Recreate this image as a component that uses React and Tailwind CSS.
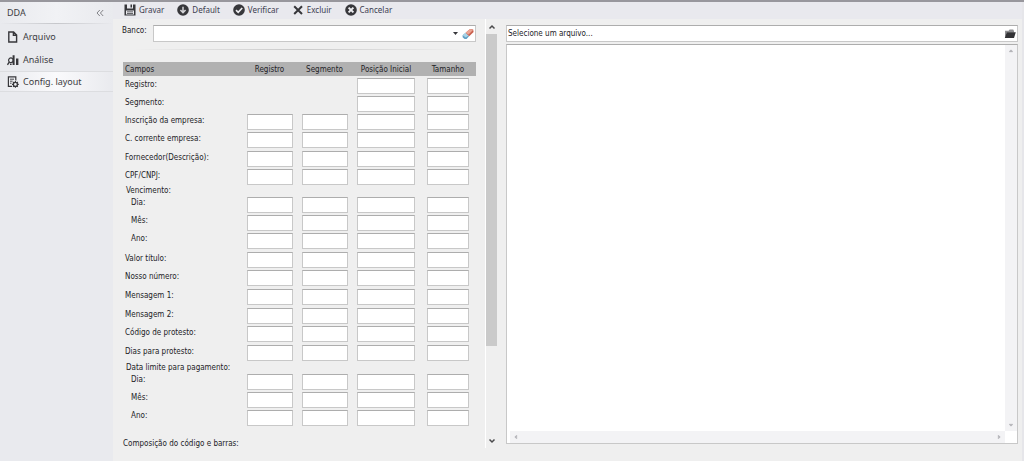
import React from 'react'

const FloppyIcon = () => (
  <svg className="w-3 h-3 shrink-0" viewBox="0 0 12 12" fill="#37373b">
    <path fillRule="evenodd" d="M0.5 0.5h11v11h-11z M3 0.5v4h6v-4z M2 6.5v4h8v-4z" />
    <path d="M6.5 0.5h1.5v3H6.5z M3 7.5h6v0.8H3z M3 9.2h6v0.8H3z" />
  </svg>
)

const DownIcon = () => (
  <svg className="w-3 h-3 shrink-0" viewBox="0 0 12 12">
    <circle cx="6" cy="6" r="5.8" fill="#37373b" />
    <path d="M6 2.8v5.4M3.4 6L6 8.6L8.6 6" fill="none" stroke="#d4d4d8" strokeWidth="1.5" />
  </svg>
)

const CheckIcon = () => (
  <svg className="w-3 h-3 shrink-0" viewBox="0 0 12 12">
    <circle cx="6" cy="6" r="5.8" fill="#37373b" />
    <path d="M3 6.2l2.2 2.1L9.2 4" fill="none" stroke="#eeeef2" strokeWidth="1.7" />
  </svg>
)

const CrossIcon = () => (
  <svg className="w-3 h-3 shrink-0" viewBox="0 0 12 12">
    <path d="M2.2 2.2l7.8 7.8M10 2.2L2.2 10" fill="none" stroke="#37373b" strokeWidth="2" />
  </svg>
)

const CancelIcon = () => (
  <svg className="w-3 h-3 shrink-0" viewBox="0 0 12 12">
    <circle cx="6" cy="6" r="5.8" fill="#37373b" />
    <path d="M3.6 3.6l4.8 4.8M8.4 3.6L3.6 8.4" fill="none" stroke="#eeeef2" strokeWidth="2" />
  </svg>
)

const FileIcon = () => (
  <svg className="w-3 h-3 shrink-0" viewBox="0 0 12 12">
    <path d="M1.8 1h4.8l3 3v7H1.8z M6.4 1v3.2h3.2" fill="none" stroke="#37373b" strokeWidth="1.4" />
  </svg>
)

const AnalysisIcon = () => (
  <svg className="w-3 h-3 shrink-0" viewBox="0 0 12 12">
    <circle cx="3.9" cy="6.2" r="2.3" fill="none" stroke="#37373b" strokeWidth="1.2" />
    <path d="M2.4 8L0.4 10.8" stroke="#37373b" strokeWidth="1.4" />
    <path d="M5.6 1.2h2v9.8h-2z M9 4.6h2.4V11H9z M3 9.4h1.6V11H3z" fill="#37373b" />
  </svg>
)

const LayoutIcon = () => (
  <svg className="w-3 h-3 shrink-0" viewBox="0 0 12 12">
    <path d="M5 10.4H1.4V0.9h7.4v3.6" fill="none" stroke="#37373b" strokeWidth="1.2" />
    <path d="M3 3.2h4M3 5.2h2.6M3 7.2h1.6" stroke="#37373b" strokeWidth="0.9" />
    <circle cx="8.4" cy="8.4" r="2" fill="none" stroke="#37373b" strokeWidth="1.3" />
    <path d="M8.4 5v1.4M8.4 10.4v1.4M5 8.4h1.4M10.4 8.4h1.4M6 6l1 1M9.8 9.8l1 1M10.8 6l-1 1M7 9.8l-1 1" stroke="#37373b" strokeWidth="1.1" />
  </svg>
)

const EraserIcon = () => (
  <svg className="w-3 h-3" viewBox="0 0 12 12">
    <path d="M0.6 7.2L3.6 4.8l3.6 3.2L4.6 11H2.6L0.6 9.2z" fill="#5f9fc4" />
    <path d="M0.6 7.2L3.6 4.8l3 2.6L3.8 9.4z" fill="#a9d3e6" />
    <path d="M3.6 4.8L8 1l3.2 0.6L11.6 4L7.2 8.2z" fill="#c9604e" />
    <path d="M3.6 4.8L8 1l3 0.9L6.6 6.6z" fill="#eba594" />
  </svg>
)

const FolderIcon = () => (
  <svg className="w-3 h-3" viewBox="0 0 12 12">
    <path d="M1 10V2.8h3.6L5.6 1.6h3.6L10 3v1.4H3z" fill="#8d8d90" />
    <path d="M2.8 4.2H11.8L10 10H0.8z" fill="#323235" />
  </svg>
)

const Arrow = ({ d, color = '#4a4a4c' }) => (
  <svg className="w-2 h-2" viewBox="0 0 8 8">
    <path d={d} fill="none" stroke={color} strokeWidth="1.5" />
  </svg>
)

const actions = [
  { label: 'Gravar', icon: FloppyIcon },
  { label: 'Default', icon: DownIcon },
  { label: 'Verificar', icon: CheckIcon },
  { label: 'Excluir', icon: CrossIcon },
  { label: 'Cancelar', icon: CancelIcon },
]

const menu = [
  { label: 'Arquivo', icon: FileIcon },
  { label: 'Análise', icon: AnalysisIcon },
  { label: 'Config. layout', icon: LayoutIcon, active: true },
]

const columns = [
  { name: 'Registro', width: 'w-[46px]' },
  { name: 'Segmento', width: 'w-[46px]' },
  { name: 'Posição Inicial', width: 'w-[58px]' },
  { name: 'Tamanho', width: 'w-[42px]' },
]

const short = 'h-[18px]'
const tall = 'h-[19px]'

const rows = [
  { label: 'Registro:', height: short, from: 2 },
  { label: 'Segmento:', height: short, from: 2 },
  { label: 'Inscrição da empresa:', height: short },
  { label: 'C. corrente empresa:', height: tall },
  { label: 'Fornecedor(Descrição):', height: short },
  { label: 'CPF/CNPJ:', height: short },
  { label: 'Vencimento:', title: true },
  { label: 'Dia:', height: short, nested: true },
  { label: 'Mês:', height: short, nested: true },
  { label: 'Ano:', height: tall, nested: true },
  { label: 'Valor título:', height: short },
  { label: 'Nosso número:', height: tall },
  { label: 'Mensagem 1:', height: tall },
  { label: 'Mensagem 2:', height: short },
  { label: 'Código de protesto:', height: tall },
  { label: 'Dias para protesto:', height: tall },
  { label: 'Data limite para pagamento:', title: true },
  { label: 'Dia:', height: short, nested: true },
  { label: 'Mês:', height: short, nested: true },
  { label: 'Ano:', height: short, nested: true },
]

const Sidebar = () => (
  <aside className="w-[113px] shrink-0 bg-[#e9eaee] font-['Noto_Sans',sans-serif] text-[9px] text-[#3c3c42]">
    <div className="h-[21px] pl-[7px] pr-[9px] flex items-center justify-between bg-linear-to-r from-[#e9eaee] via-[#f1f2f5] to-[#e9eaee]">
      <span>DDA</span>
      <button aria-label="Recolher menu" className="flex">
        <svg className="w-2 h-2" viewBox="0 0 8 8">
          <path d="M3.8 1L1 4l2.8 3M7.2 1L4.4 4l2.8 3" fill="none" stroke="#77777c" strokeWidth="0.9" />
        </svg>
      </button>
    </div>
    <div className="h-px bg-linear-to-r from-[#e9eaee] via-[#c6c7cb] to-[#e9eaee]"></div>
    <nav className="pt-px">
      {menu.map(({ label, icon: Icon, active }) => (
        <a
          key={label}
          href="#"
          className={
            active
              ? 'h-[21px] pl-[7px] flex items-center gap-1 bg-linear-to-r from-[#e9eaee] via-[#fafafc] to-[#e9eaee] border-y border-[#dcdde0]'
              : 'h-[23px] pl-[7px] flex items-center gap-1'
          }
        >
          <Icon />
          <span>{label}</span>
        </a>
      ))}
    </nav>
  </aside>
)

const Toolbar = () => (
  <div className="h-[17px] pl-[11px] pb-0.5 flex items-center gap-[13px] bg-[#e9e9ee] font-['Noto_Sans',sans-serif] text-[8px] text-[#3c3c50]">
    {actions.map(({ label, icon: Icon }) => (
      <button key={label} className="flex items-center gap-[3px]">
        <Icon />
        {label}
      </button>
    ))}
  </div>
)

const LayoutTable = () => (
  <table className="w-full table-fixed border-collapse">
    <colgroup>
      <col />
      <col className="w-[55px]" />
      <col className="w-[55px]" />
      <col className="w-[68px]" />
      <col className="w-[56px]" />
    </colgroup>
    <thead>
      <tr className="h-[14px] bg-[#b1b1b1]">
        <th className="p-0 pt-0.5 pl-0.5 text-left font-normal leading-3">Campos</th>
        {columns.map((col) => (
          <th key={col.name} className="p-0 pt-0.5 font-normal leading-3 whitespace-nowrap">{col.name}</th>
        ))}
      </tr>
    </thead>
    <tbody>
      <tr className="h-px"><td colSpan={5} className="p-0"></td></tr>
      {rows.map((row, i) =>
        row.title ? (
          <tr key={i} className="h-[10px]">
            <th colSpan={5} className="p-0 pl-[3px] text-left font-normal leading-[10px]">{row.label}</th>
          </tr>
        ) : (
          <tr key={i} className={row.height}>
            <th
              className={
                row.nested
                  ? 'p-0 pl-2 text-left align-top font-normal leading-[14px]'
                  : 'p-0 pl-0.5 text-left align-top font-normal leading-4'
              }
            >
              {row.label}
            </th>
            {columns.map((col, c) => (
              <td key={col.name} className="p-0 pt-px align-top">
                {c >= (row.from || 0) && (
                  <input
                    type="text"
                    aria-label={`${row.label} ${col.name}`}
                    className={`${col.width} block mx-auto h-4 px-1 bg-white border border-[#c8c8c8] border-t-[#adadad] outline-none`}
                  />
                )}
              </td>
            ))}
          </tr>
        )
      )}
    </tbody>
  </table>
)

const FormPanel = () => (
  <section className="w-[384px] shrink-0 flex min-h-0">
    <div className="flex-1 min-w-0 overflow-hidden pl-[9px] pr-[9px] pt-[6px]">
      <div className="flex items-start">
        <label htmlFor="banco" className="w-[31px] leading-3">Banco:</label>
        <div className="flex-1 h-[17px] pr-px flex items-center gap-1 bg-white border border-[#c8c8c8] border-t-[#adadad]">
          <select id="banco" className="flex-1 h-full appearance-none outline-none"></select>
          <svg className="w-[5px] h-[3px]" viewBox="0 0 5 3">
            <path d="M0 0h5L2.5 3z" fill="#37373b" />
          </svg>
          <button aria-label="Limpar banco" className="flex"><EraserIcon /></button>
        </div>
      </div>
      <div className="mx-3 mt-[7px] mb-3 h-px bg-linear-to-r from-[#efefef] via-[#c9c9c9] to-[#efefef]"></div>
      <div className="pl-px">
        <LayoutTable />
      </div>
      <p className="mt-[11px] pl-px leading-3 whitespace-nowrap">Composição do código e barras:</p>
    </div>
    <div className="w-3 shrink-0 flex flex-col items-center border-l border-white">
      <button aria-label="Rolar para cima" className="h-[15px] flex items-center"><Arrow d="M1.5 5.5L4 3l2.5 2.5" /></button>
      <div className="w-full flex-1">
        <div className="w-full h-[78%] bg-[#cacaca]"></div>
      </div>
      <button aria-label="Rolar para baixo" className="h-[14px] flex items-center"><Arrow d="M1.5 2.5L4 5l2.5-2.5" /></button>
    </div>
  </section>
)

const FilePanel = () => (
  <section className="flex-1 min-w-0 ml-[9px] mr-1 pt-[6px] pb-1 flex flex-col gap-0.5">
    <div className="h-[17px] shrink-0 px-px flex items-center bg-white border border-[#c8c8c8] border-t-[#adadad]">
      <input
        type="text"
        aria-label="Arquivo"
        defaultValue="Selecione um arquivo..."
        className="flex-1 min-w-0 outline-none"
      />
      <button aria-label="Abrir arquivo" className="flex"><FolderIcon /></button>
    </div>
    <div className="flex-1 min-h-0 flex flex-col bg-white border border-[#c8c8c8] border-t-[#adadad]">
      <div className="flex-1 min-h-0 flex">
        <textarea aria-label="Conteúdo do arquivo" className="flex-1 resize-none outline-none"></textarea>
        <div className="w-3 py-0.5 flex flex-col items-center justify-between bg-[#f3f3f5]">
          <Arrow d="M2.5 5L4 3.5L5.5 5" color="#b4b4b8" />
          <Arrow d="M2.5 3L4 4.5L5.5 3" color="#b4b4b8" />
        </div>
      </div>
      <div className="h-3 ml-[3px] mr-3 px-0.5 flex items-center justify-between bg-[#f3f3f5]">
        <Arrow d="M5 2.5L3.5 4L5 5.5" color="#b4b4b8" />
        <Arrow d="M3 2.5L4.5 4L3 5.5" color="#b4b4b8" />
      </div>
    </div>
  </section>
)

const App = () => {
  return (
    <div className="h-screen flex border-t-2 border-[#98979d] bg-[#efefef] overflow-hidden">
      <Sidebar />
      <main className="flex-1 min-w-0 flex flex-col border-r-2 border-[#e6e6ea]">
        <Toolbar />
        <div className="flex-1 min-h-0 flex mb-[13px] font-['DejaVu_Sans_Condensed','DejaVu_Sans',sans-serif] text-[8px] text-[#222226]">
          <FormPanel />
          <FilePanel />
        </div>
      </main>
    </div>
  )
}

export default App
